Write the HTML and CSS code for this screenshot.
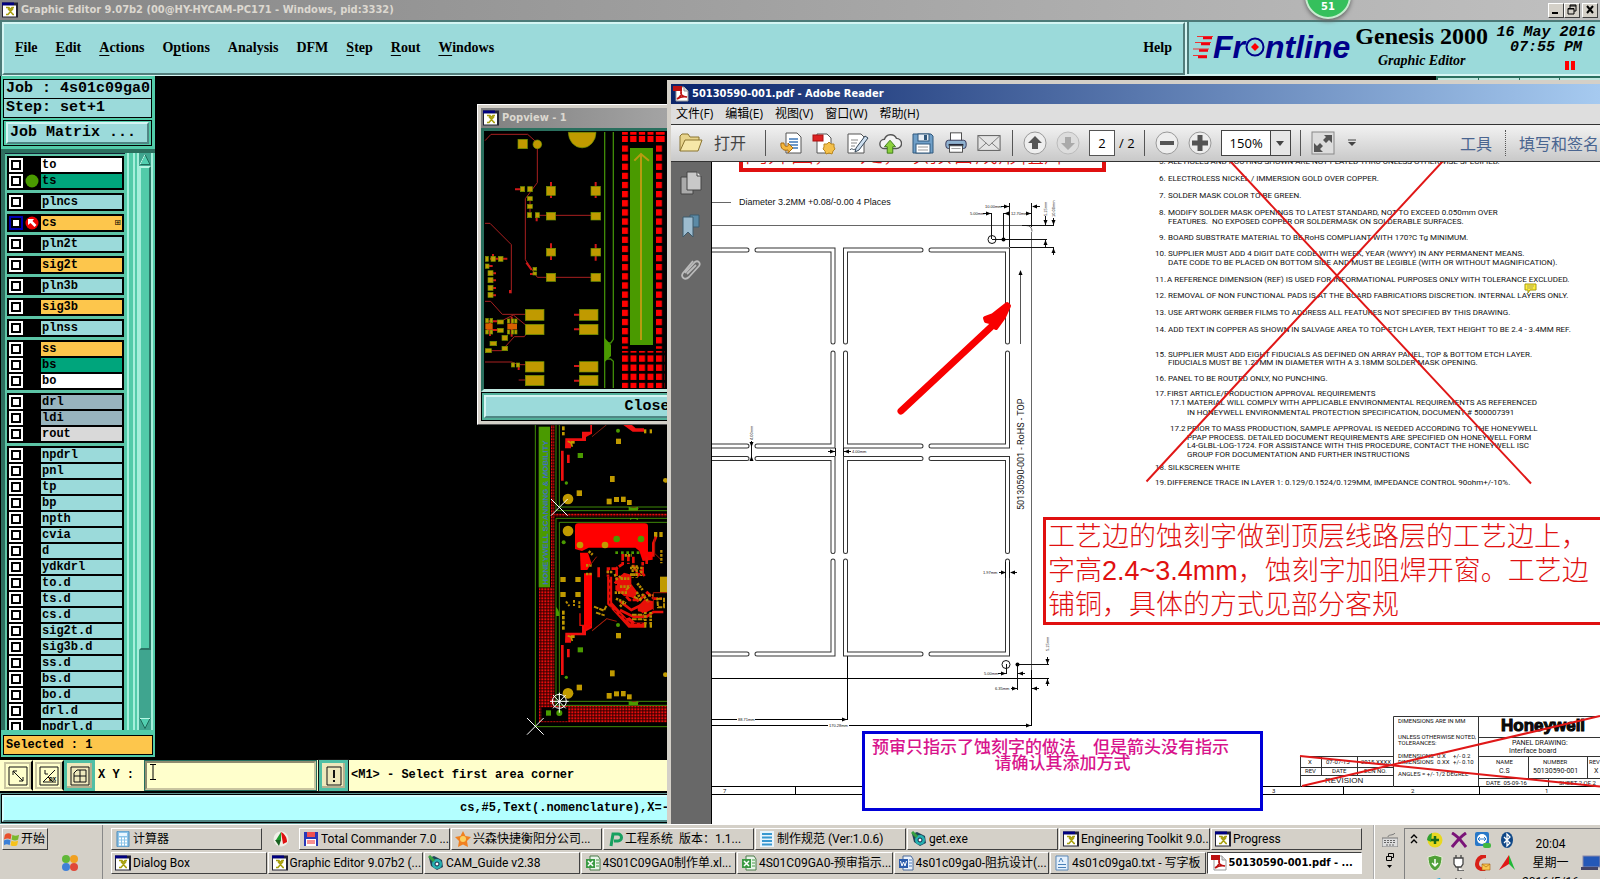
FILE: index.html
```html
<!DOCTYPE html>
<html lang="zh-CN">
<head>
<meta charset="utf-8">
<title>Graphic Editor 9.07b2</title>
<link rel="stylesheet" href="styles.css">
</head>
<body>
<svg class="defs" aria-hidden="true">
  <defs>
    <symbol id="i-x" viewBox="0 0 16 15">
      <rect x="0" y="0" width="16" height="15" fill="#223"/><rect x="0" y="0" width="12" height="3" fill="#000080"/><rect x="1" y="3" width="13" height="11" fill="#fff"/>
      <path d="M4 5h3l1 2 2-2h2M4 12h2l5-6M6 6l5 6h1" fill="none" stroke="#a8a010" stroke-width="1.6"/>
    </symbol>
    <symbol id="i-pdf" viewBox="0 0 16 16">
      <path d="M3 1h8l4 4v10H3z" fill="#fff" stroke="#999"/><path d="M11 1v4h4" fill="#ddd" stroke="#999"/>
      <rect x="0" y="0" width="9" height="5" fill="#b11"/><path d="M4 13c3-2 5-5 4-8-1 4 2 6 6 6-4-1-7 0-10 2z" fill="none" stroke="#b11" stroke-width="1.6"/>
    </symbol>
    <symbol id="i-xls" viewBox="0 0 16 16">
      <path d="M5 1h8l2 3v11H5z" fill="#e8f4e8" stroke="#4a7a4a"/><path d="M11 5h3M11 8h3M11 11h3" stroke="#4a9a4a"/>
      <rect x="1" y="4" width="9" height="9" fill="#3a9a44"/><path d="M3 6l5 5M8 6l-5 5" stroke="#fff" stroke-width="1.5"/>
    </symbol>
    <symbol id="i-doc" viewBox="0 0 16 16">
      <path d="M5 1h8l2 3v11H5z" fill="#eaf1fb" stroke="#4a6a9a"/><path d="M11 5h3M11 8h3M11 11h3" stroke="#4a7aba"/>
      <rect x="1" y="4" width="9" height="9" fill="#2c5cac"/><path d="M2.500 6l1.500 5 1.500-4 1.500 4 1.500-5" fill="none" stroke="#fff"/>
    </symbol>
    <symbol id="i-gear" viewBox="0 0 16 16">
      <path d="M1 3l5-2 8 4 1 7-6 3-6-4z" fill="#20455a"/><circle cx="9" cy="9" r="5" fill="#26b0b0"/><circle cx="9" cy="9" r="2" fill="#fff" stroke="#124"/><path d="M1 1l5 5" stroke="#38a040" stroke-width="3"/>
    </symbol>
  </defs>
</svg>

<div class="desktop">
  <main class="editor">
    <header class="titlebar">
      <svg class="ico"><use href="#i-x"/></svg>
      <h1>Graphic Editor 9.07b2 (00@HY-HYCAM-PC171 - Windows, pid:3332)</h1>
      <div class="winbtns">
        <button aria-label="Minimize"><svg viewBox="0 0 14 12"><path d="M3 9h6" stroke="#000" stroke-width="2"/></svg></button>
        <button aria-label="Restore"><svg viewBox="0 0 14 12"><path d="M5 4V1h6v6H9M5 2h6M3 4.500h6V10H3zM3 5h6" fill="none" stroke="#000"/></svg></button>
        <button class="close" aria-label="Close"><svg viewBox="0 0 14 12"><path d="M4 2l6 7M10 2L4 9" stroke="#000" stroke-width="2"/></svg></button>
      </div>
    </header>
    <div class="head">
      <nav class="menubar">
        <button><u>F</u>ile</button><button><u>E</u>dit</button><button><u>A</u>ctions</button><button>O<u>p</u>tions</button><button>Analysis</button><button>DFM</button><button><u>S</u>tep</button><button><u>R</u>out</button><button><u>W</u>indows</button>
        <button class="help">Help</button>
      </nav>
      <section class="brand">
        <div class="logo">
          <svg class="streaks" viewBox="0 0 20 24"><path d="M4 1.500h16M2 7.500h16M0 14h16M0 20.500h14" stroke="#e33" stroke-width="1"/><path d="M10 3h9M8 9h9M6 15.500h9M5 22h9" stroke="#f00010" stroke-width="2.500"/></svg>
          <span>Fr</span><svg class="target" viewBox="0 0 20 20"><circle cx="10" cy="10" r="8.500" fill="none" stroke="#00008b" stroke-width="2"/><path d="M10 6l4 4-4 4-4-4z" fill="#f00"/></svg><span>ntline</span>
        </div>
        <div class="product"><strong>Genesis 2000</strong><em>Graphic Editor</em></div>
        <div class="stamp"><span>16 May 2016</span><span>07:55 PM</span><i></i></div>
      </section>
    </div>

    <div class="work">
      <aside class="side">
        <div class="info"><div>Job : 4s01c09ga0</div><div>Step: set+1</div></div>
        <div class="matrix"><button>Job Matrix ...</button></div>
        <div class="layers">
          <div class="list">
            <div class="grp"><label class="w"><input type="checkbox"><i></i><span>to</span></label><label class="g"><input type="checkbox"><i><svg viewBox="0 0 14 14"><circle cx="7" cy="7" r="6.500" fill="#4a9a00"/></svg></i><span>ts</span></label></div>
            <div class="grp"><label><input type="checkbox"><i></i><span>plncs</span></label></div>
            <div class="grp"><label class="o cur"><input type="checkbox"><i><svg viewBox="0 0 14 14"><circle cx="7" cy="7" r="6.500" fill="#e00"/><path d="M3 3h6L7.500 5l4 4-2 2-4-4L3 9z" fill="#fff"/></svg></i><span>cs<b>⊞</b></span></label></div>
            <div class="grp"><label><input type="checkbox"><i></i><span>pln2t</span></label></div>
            <div class="grp"><label class="o"><input type="checkbox"><i></i><span>sig2t</span></label></div>
            <div class="grp"><label><input type="checkbox"><i></i><span>pln3b</span></label></div>
            <div class="grp"><label class="o"><input type="checkbox"><i></i><span>sig3b</span></label></div>
            <div class="grp"><label><input type="checkbox"><i></i><span>plnss</span></label></div>
            <div class="grp"><label class="o"><input type="checkbox"><i></i><span>ss</span></label><label class="g"><input type="checkbox"><i></i><span>bs</span></label><label class="w"><input type="checkbox"><i></i><span>bo</span></label></div>
            <div class="grp"><label class="s"><input type="checkbox"><i></i><span>drl</span></label><label class="s"><input type="checkbox"><i></i><span>ldi</span></label><label class="l"><input type="checkbox"><i></i><span>rout</span></label></div>
            <div class="grp"><label><input type="checkbox"><i></i><span>npdrl</span></label><label><input type="checkbox"><i></i><span>pnl</span></label><label><input type="checkbox"><i></i><span>tp</span></label><label><input type="checkbox"><i></i><span>bp</span></label><label><input type="checkbox"><i></i><span>npth</span></label><label><input type="checkbox"><i></i><span>cvia</span></label><label><input type="checkbox"><i></i><span>d</span></label><label><input type="checkbox"><i></i><span>ydkdrl</span></label><label><input type="checkbox"><i></i><span>to.d</span></label><label><input type="checkbox"><i></i><span>ts.d</span></label><label><input type="checkbox"><i></i><span>cs.d</span></label><label><input type="checkbox"><i></i><span>sig2t.d</span></label><label><input type="checkbox"><i></i><span>sig3b.d</span></label><label><input type="checkbox"><i></i><span>ss.d</span></label><label><input type="checkbox"><i></i><span>bs.d</span></label><label><input type="checkbox"><i></i><span>bo.d</span></label><label><input type="checkbox"><i></i><span>drl.d</span></label><label><input type="checkbox"><i></i><span>npdrl.d</span></label></div>
          </div>
          <div class="edge"></div>
          <div class="scroll">
            <svg viewBox="0 0 12 12"><path d="M6 1l5 10H1z" fill="#52cfb0" stroke="#1f6b5a"/><path d="M6 1L1 11" stroke="#b6f5e2"/></svg>
            <div class="thumb"></div>
            <svg viewBox="0 0 12 12"><path d="M1 1h10L6 11z" fill="#52cfb0" stroke="#1f6b5a"/><path d="M1 1h10" stroke="#b6f5e2"/></svg>
          </div>
        </div>
        <div class="selected">Selected : 1</div>
      </aside>
      <div class="canvas">
        <div class="ticks"><i></i><i></i><i></i><i></i></div>
        <svg class="board" viewBox="0 42 441 948">
          <defs>
            <pattern id="dots" width="9" height="9" patternUnits="userSpaceOnUse" x="1" y="4"><rect width="9" height="9" fill="#300"/><rect width="6" height="6" fill="#e80c0c"/></pattern>
            <g id="pads">
              <g fill="#c09a00"><circle cx="144" cy="267" r="16"/><rect x="170" y="241" width="16" height="17"/><rect x="270" y="198" width="14" height="18"/><rect x="260" y="266" width="15" height="17"/><rect x="282" y="261" width="15" height="15"/><rect x="303" y="260" width="14" height="16"/><rect x="321" y="270" width="14" height="15"/><rect x="288" y="86" width="15" height="16"/><rect x="126" y="49" width="8" height="12"/><rect x="126" y="66" width="8" height="10"/><rect x="138" y="92" width="26" height="9"/><rect x="372" y="58" width="7" height="12"/><rect x="389" y="58" width="7" height="12"/><circle cx="436" cy="211" r="7"/></g>
              <g fill="#4a9a00"><rect x="173" y="129" width="16" height="15"/><circle cx="139" cy="219" r="5"/><circle cx="294" cy="62" r="6"/></g>
              <g fill="#f01010"><path d="M136 85h50v-20h25v-20h5v26l-18 10v12h-45v22h-18z"/><path d="M123 122h8v90h-8zM141 134h8v25h-8zM310 45l28 20h34v-10h-25l-18-16z"/></g>
              <path d="M216 80l44-36M328 298l10-6h14l4 4M330 301h25" fill="none" stroke="#802010" stroke-width="3"/>
              <path d="M143 94l10 4 4 12" fill="none" stroke="#c09a00" stroke-width="5"/>
              <path d="M326 290q14 6 28 0v12h-28z" fill="#4a9a00"/>
            </g>
          </defs>
          <rect x="93" y="42" width="10" height="490" fill="url(#dots)"/>
          <rect x="57" y="532" width="46" height="355" fill="url(#dots)"/>
          <rect x="57" y="887" width="384" height="50" fill="url(#dots)"/>
          <rect x="103" y="311" width="338" height="8" fill="url(#dots)"/>
          <rect x="56" y="50" width="34" height="482" fill="#4a9a00"/>
          <text class="etch" transform="translate(83 524) rotate(-90)">HONEYWELL SCANNING &amp; MOBILITY</text>
          <path d="M46 42v908h395M108 42v260h333M118 42v249h323M441 325H108v561h333M441 337H118v537h323" fill="none" stroke="#3f8a08" stroke-width="3"/>
          <use href="#pads"/><use href="#pads" y="583"/>
          <path d="M330 330q10-7 24 0v-6h-24zM108 590q12 14 10 28h-10z" fill="#4a9a00"/>
          <path d="M165 350q0-10 10-10h199q10 0 10 10v75h14v24l-30 4-10-30-12-10H206l-20 10-21-6z" fill="#f00"/>
          <path d="M192 490h24v140l-6 22-18 10z" fill="#f00"/><path d="M180 428h24l10 30-12 22h-20z" fill="#f00"/>
          <path d="M292 506l20-18 22 6v28l18 24-8 18-30-6-24-16zM352 590l22-22 26 6v22l-24 12-22-4z" fill="#e81008"/>
          <g fill="#c09a00"><circle cx="144" cy="363" r="16"/><circle cx="180" cy="405" r="10"/><circle cx="255" cy="405" r="10"/><rect x="121" y="501" width="16" height="15"/><rect x="166" y="501" width="16" height="15"/><rect x="121" y="546" width="16" height="15"/><rect x="166" y="546" width="16" height="15"/><rect x="402" y="366" width="10" height="15"/><rect x="418" y="366" width="10" height="15"/><rect x="420" y="500" width="21" height="48"/><rect x="126" y="602" width="8" height="12"/><rect x="126" y="618" width="8" height="10"/></g>
          <g fill="#4a9a00"><circle cx="290" cy="387" r="10"/><circle cx="363" cy="387" r="10"/><circle cx="131" cy="397" r="6"/><rect x="286" y="424" width="8" height="8"/><rect x="303" y="424" width="8" height="8"/><rect x="319" y="424" width="8" height="8"/><rect x="334" y="424" width="8" height="8"/><rect x="350" y="424" width="8" height="8"/></g>
          <g fill="none" stroke="#e81008" stroke-width="8"><path d="M269 500v80l60 66h44" stroke-width="15"/><path d="M308 432v30l-20 14h-24v24M325 434v28M340 440v26l14 30 14-10v-30M290 478v60l20 12 18 20h30l24-22 20 18h24" stroke-dasharray="20 4"/><path d="M284 520l20-20 28 30v24l24 20M300 574l34 26 24-12 12 20M380 440v22M236 472v30M400 440v-40l8-20M360 480l14 18M300 600l40 20h40l20-14h30"/></g>
          <g fill="none" stroke="#b88a00" stroke-width="8"><path d="M206 424l12 10M198 466h18M198 492h18M260 486h20M330 474h26M330 494h22M314 436h22M350 546l14 26M300 590l14-16M376 606v40M392 606v40M284 548h40M300 530h30M352 520l16 20M366 552l20 24M288 566l30 14M302 506h26" stroke-dasharray="7 3"/><path d="M222 590l30 12 8-16M228 608l26 8M336 614h36M336 628h36M342 560l22 12M318 540l14-14M296 498l14 10M412 566h20v26h-18z" stroke-width="6" stroke-dasharray="14 3"/><path d="M338 466v38M350 466v38M364 470v28M284 492l8 20M384 556h18M424 420v40" stroke-width="7" stroke-dasharray="8 4"/></g>
          <path d="M269 500v90l64 50h34" fill="none" stroke="#500" stroke-width="3" stroke-dasharray="9 9"/>
          <path d="M400 600v-52h41M404 380v50l16 16M216 662l44-36 30 8M230 440l-20 26" fill="none" stroke="#a01808" stroke-width="3"/>
          <path d="M138 574l10 14M162 570v18M178 574v20" stroke="#b88a00" stroke-width="6" stroke-dasharray="8 4"/>
          <path d="M180 610v36h22" fill="none" stroke="#e81008" stroke-width="4"/>
          <rect x="64" y="892" width="80" height="42"/><rect x="78" y="901" width="15" height="16" fill="#4a9a00"/><circle cx="118" cy="909" r="9" fill="#4a9a00"/>
          <g fill="none" stroke="#fff" stroke-width="3"><path d="M93 267l50 50M143 267l-50 50M21 924l50 50M71 924l-50 50M99 855l38 40M137 855l-38 40M118 848v60M90 874h56"/><circle cx="118" cy="874" r="21"/></g>
        </svg>
      </div>
    </div>

    <div class="cmd">
      <button aria-label="Scale"><svg viewBox="0 0 20 20"><path d="M1 1h18v18H1zM5 5l10 10M5 5h4M5 5v4M15 15h-4M15 15v-4" fill="none" stroke="#111"/></svg></button>
      <button aria-label="Angle"><svg viewBox="0 0 20 20"><path d="M1 1h18v18H1zM4 16L16 4M4 16h13M6 4v4h3M9 11l5 5" fill="none" stroke="#111"/><text x="10" y="15" font-size="6" font-weight="bold">DX</text></svg></button>
      <button class="on" aria-label="Grid"><svg viewBox="0 0 20 20"><path d="M1 1h18v18H1zM7 4h9v12H4V7zM10 4v12M4 10h12" fill="none" stroke="#111"/></svg></button>
      <label for="xy">X Y :</label>
      <input id="xy" type="text">
      <svg class="ibeam" viewBox="0 0 6 16"><path d="M0 .500h6M3 1v14M0 15.500h6" stroke="#000"/></svg>
      <button class="on bang" aria-label="Alert"><svg viewBox="0 0 20 20"><path d="M3 1h14v18H3z" fill="none" stroke="#111"/><path d="M10 4v8M10 14v2" stroke="#111" stroke-width="2"/></svg></button>
      <output>&lt;M1&gt; - Select first area corner</output>
    </div>
    <div class="status"><div>cs,#5,Text(.nomenclature),X=-5.0</div></div>
  </main>

  <section class="popview">
    <header class="titlebar"><svg class="ico"><use href="#i-x"/></svg><h2>Popview - 1</h2></header>
    <div class="popcanvas">
      <svg viewBox="42 93 978 774">
        <defs><pattern id="sq" x="456" y="136" width="25.500" height="27.400" patternUnits="userSpaceOnUse"><rect width="18" height="19" fill="#f00"/></pattern></defs>
        <g fill="none" stroke="#a82020" stroke-width="3"><path d="M45 122l18-19h110l29 26v119l-36 48v183l36 53h180M202 346h180M45 370h15l64 64v146M45 604h17l35 39h70M100 660l30-15 37 30M45 752h50l38-42h30l10-14M45 786h80l20 8h22M166 840h-20M180 302v36"/></g>
        <g fill="none" stroke="#d01818" stroke-width="6"><path d="M243 246v48M377 246v48M243 430v50M377 432v50M135 268h18M185 510l-16-22M180 522h10M312 644h18M312 688h18M312 798h18M312 842h18M200 346v18M120 580v-10M146 798v12M60 476h52M50 498h18M60 520h18M60 541h18M60 564h18M60 586h18M69 462v12M60 668v40M125 650v60M50 664h50M50 690h48"/></g>
        <g fill="#c09a00" stroke="#6b9400" stroke-width="2"><rect x="144" y="118" width="28" height="28"/><circle cx="202" cy="133" r="13"/><rect x="229" y="259" width="27" height="27"/><rect x="363" y="259" width="28" height="27"/><rect x="229" y="337" width="28" height="23"/><rect x="363" y="337" width="29" height="23"/><rect x="229" y="445" width="28" height="23"/><rect x="363" y="445" width="29" height="23"/><rect x="229" y="520" width="28" height="24"/><rect x="363" y="520" width="29" height="24"/><path d="M295 97h83a41 46 0 0 1-83 0z"/><rect x="166" y="628" width="56" height="33"/><rect x="166" y="673" width="56" height="31"/><rect x="328" y="628" width="56" height="33"/><rect x="328" y="673" width="56" height="31"/><rect x="166" y="785" width="56" height="31"/><rect x="166" y="826" width="56" height="31"/><rect x="328" y="785" width="56" height="31"/><rect x="328" y="826" width="56" height="31"/><rect x="151" y="260" width="13" height="15"/><rect x="173" y="260" width="14" height="15"/><rect x="172" y="290" width="15" height="12"/><rect x="172" y="313" width="15" height="12"/><rect x="172" y="338" width="13" height="15"/><rect x="196" y="338" width="12" height="15"/><rect x="189" y="502" width="11" height="9"/><rect x="189" y="516" width="11" height="9"/><rect x="46" y="469" width="9" height="15"/><rect x="63" y="469" width="13" height="15"/><rect x="85" y="469" width="14" height="15"/><rect x="46" y="492" width="11" height="13"/><rect x="54" y="512" width="15" height="15"/><rect x="54" y="533" width="15" height="15"/><rect x="54" y="556" width="15" height="15"/><rect x="54" y="577" width="15" height="15"/><rect x="47" y="655" width="8" height="13"/><rect x="60" y="655" width="8" height="13"/><rect x="47" y="690" width="8" height="12"/><rect x="60" y="690" width="8" height="12"/><rect x="82" y="660" width="18" height="12"/><rect x="82" y="685" width="18" height="12"/><rect x="112" y="657" width="7" height="12"/><rect x="124" y="657" width="7" height="12"/><rect x="134" y="657" width="7" height="12"/><rect x="112" y="690" width="7" height="12"/><rect x="124" y="690" width="7" height="12"/><rect x="134" y="690" width="7" height="12"/><rect x="60" y="724" width="20" height="13"/><rect x="96" y="706" width="17" height="15"/><rect x="96" y="739" width="17" height="13"/><rect x="46" y="746" width="18" height="12"/><rect x="124" y="789" width="10" height="12"/><rect x="139" y="789" width="10" height="12"/></g>
        <rect x="46" y="670" width="22" height="18" fill="#d86000"/><rect x="112" y="671" width="29" height="17" fill="#d86000"/>
        <path d="M404 96v768M430 96v622l-8 11h-8M430 864v-80l-8-7h-12" fill="none" stroke="#3f8a08" stroke-width="4"/><path d="M404 714l19 20v34l-19 18z" fill="#4a9a00"/>
        <path d="M456 96h128v8H456zM456 108h128v18H456z" fill="#f00"/><path d="M477 96v32M503 96v32M529 96v32M554 96v32" stroke="#000" stroke-width="7"/>
        <path d="M456 136h20v610h-20zM558 136h20v610h-20z" fill="url(#sq)"/><rect x="456" y="753" width="128" height="111" fill="url(#sq)"/>
        <rect x="480" y="144" width="69" height="591" fill="#4a9a00"/><path d="M513 720V160M493 182l20-20 24 20" fill="none" stroke="#b89c10" stroke-width="6"/>
      </svg>
    </div>
    <div class="popfoot"><button>Close</button></div>
  </section>

  <section class="reader">
    <header class="rtitle"><svg class="ico"><use href="#i-pdf"/></svg><h2>50130590-001.pdf - Adobe Reader</h2></header>
    <nav class="rmenu"><button>文件(F)</button><button>编辑(E)</button><button>视图(V)</button><button>窗口(W)</button><button>帮助(H)</button></nav>
    <div class="rtools">
      <button class="open"><svg viewBox="0 0 24 20"><path d="M1 18V3l2-2h6l2 3h9v3" fill="#e8d48c" stroke="#8a7430"/><path d="M1 18L6 7h17l-4 11z" fill="#f6e7a8" stroke="#8a7430"/></svg>打开</button>
      <span class="sep"></span>
      <div class="tset">
        <button aria-label="Convert"><svg viewBox="0 0 24 24"><path d="M7 2h11l4 4v16H7z" fill="#fff" stroke="#555"/><path d="M10 8h9M10 11h9M10 14h9M12 17h7" stroke="#3f78b8" stroke-width="1.500"/><path d="M2 12c-1 6 3 8 7 7v3l5-5-5-5v3c-2 1-4 0-4-3z" fill="#f6b73c" stroke="#a86a10"/></svg></button>
        <button aria-label="Create PDF"><svg viewBox="0 0 24 24"><path d="M5 3h10l4 4v15H5z" fill="#fff" stroke="#555"/><rect x="1" y="4" width="10" height="6" fill="#d22" stroke="#a11"/><path d="M17 11l2 2 3 0 0 3 1 2-2 2-1 3-3-1-3 1-1-3-2-2 1-2 0-3 3 0z" fill="#f4c04a" stroke="#b98720"/></svg></button>
        <button aria-label="Sign"><svg viewBox="0 0 24 24"><path d="M3 3h13l3 3v16H3z" fill="#fff" stroke="#555"/><path d="M6 9h7M6 12h6M6 15h4" stroke="#888"/><path d="M20 5l3 2-9 12-4 2 1-4z" fill="#cfe0f0" stroke="#345"/><path d="M5 19c2-3 3 1 5-1" fill="none" stroke="#345"/></svg></button>
        <button aria-label="Upload"><svg viewBox="0 0 26 24"><path d="M7 18a5 5 0 0 1 0-10 7 7 0 0 1 13-1 5.500 5.500 0 0 1 0 11z" fill="#f4f4f4" stroke="#555" stroke-width="1.500"/><path d="M13 9l6 7h-3v7h-6v-7H7z" fill="#8cd03c" stroke="#3a7a18"/></svg></button>
        <button aria-label="Save"><svg viewBox="0 0 24 24"><path d="M2 3h18l2 2v17H2z" fill="#6f9fc8" stroke="#31587c"/><rect x="7" y="3" width="11" height="7" fill="#e8eef4" stroke="#31587c"/><rect x="13" y="4" width="3" height="5" fill="#31587c"/><rect x="5" y="13" width="14" height="9" fill="#fff" stroke="#31587c"/><path d="M7 16h10M7 19h10" stroke="#999"/></svg></button>
        <button aria-label="Print"><svg viewBox="0 0 26 24"><rect x="7" y="1" width="12" height="9" fill="#fff" stroke="#444"/><rect x="2" y="9" width="22" height="9" rx="3" fill="#8fb2d0" stroke="#335"/><path d="M5 14h16" stroke="#223" stroke-width="2"/><rect x="6" y="15" width="14" height="7" fill="#fff" stroke="#444"/><path d="M8 18h10" stroke="#999"/></svg></button>
        <button aria-label="Mail"><svg viewBox="0 0 26 24"><rect x="1" y="4" width="24" height="16" fill="#e4e4e4" stroke="#555"/><path d="M1 4l12 11L25 4M1 20l9-8M25 20l-9-8" fill="none" stroke="#777"/></svg></button>
      </div>
      <span class="sep"></span>
      <button aria-label="Previous page"><svg viewBox="0 0 24 24"><circle cx="12" cy="12" r="11" fill="#eee" stroke="#999"/><path d="M12 5l7 7h-4v6H9v-6H5z" fill="#555"/></svg></button>
      <button aria-label="Next page"><svg viewBox="0 0 24 24"><circle cx="12" cy="12" r="11" fill="#ddd" stroke="#bbb"/><path d="M12 19l7-7h-4V6H9v6H5z" fill="#aaa"/></svg></button>
      <div class="pager"><input class="pageno" type="text" value="2" aria-label="Page"><span>/ 2</span></div>
      <span class="sep"></span>
      <button aria-label="Zoom out"><svg viewBox="0 0 24 24"><circle cx="12" cy="12" r="11" fill="#eee" stroke="#999"/><path d="M5 12h14" stroke="#555" stroke-width="4"/></svg></button>
      <button aria-label="Zoom in"><svg viewBox="0 0 24 24"><circle cx="12" cy="12" r="11" fill="#eee" stroke="#999"/><path d="M4 12h16M12 4v16" stroke="#555" stroke-width="5"/></svg></button>
      <div class="zoombox"><select aria-label="Zoom"><option>150%</option></select><svg viewBox="0 0 8 5"><path d="M0 0h8L4 5z" fill="#444"/></svg></div>
      <span class="sep"></span>
      <button aria-label="Fit"><svg viewBox="0 0 24 24"><rect x="1" y="1" width="22" height="22" fill="#ddd" stroke="#888"/><path d="M13 4h8v8l-3-3-3 3-3-3 3-3zM3 12l3 3 3-3 3 3-3 3 3 3H3z" fill="#555"/></svg></button>
      <button class="more" aria-label="More"><svg viewBox="0 0 8 8"><path d="M0 1h8" stroke="#444"/><path d="M0 3h8L4 7z" fill="#444"/></svg></button>
      <div class="rlinks"><a href="#tools">工具</a><span class="dot"></span><a href="#sign">填写和签名</a></div>
    </div>
    <div class="rbody">
      <aside class="rside">
        <button aria-label="Pages"><svg viewBox="0 0 22 24"><path d="M1 6h12v17H1z" fill="#aaa" stroke="#444"/><path d="M7 1h10l4 4v14H7z" fill="#c8c8c8" stroke="#444"/><path d="M17 1v4h4" fill="#eee" stroke="#444"/></svg></button>
        <button aria-label="Bookmarks"><svg viewBox="0 0 22 24"><path d="M10 1h9v12h-9z" fill="#5b8aa6" stroke="#3c5a6c"/><path d="M3 3h10v20l-5-5-5 5z" fill="#9dbccf" stroke="#3c5a6c"/></svg></button>
        <button aria-label="Attachments"><svg viewBox="0 0 22 24"><path d="M5 16L15 5c3-2 6 1 4 4L9 20c-4 4-9 0-6-4L13 4M7 17L16 8" fill="none" stroke="#bbb" stroke-width="1.800"/></svg></button>
      </aside>
      <div class="page">
        <svg class="drawing" viewBox="712 162 888 662">
          <defs>
            <path id="slots" d="M712 250h35M757 250h76v92M833 353v93h-76M747 446h-35M921 250h-75.500v92M845.500 353v93h75.500M931 250h76.500v92M1007.500 353v93h-76.500M712 458.500h35M757 458.500h76v93M833 561v93h-76M747 654h-35M921 458.500h-75.500v93M845.500 561v93h75.500M931 458.500h76.500v93M1007.500 561v93h-76.500" fill="none" stroke-linecap="round"/>
            <path id="ah" d="M0 0l-5-2v4z"/>
          </defs>
          <path d="M712 225.500h310M712 202.500h19M1031.500 232v438M1026 225.500q6 0 6 6" fill="none" stroke="#666"/>
          <path d="M712 678.500h337M1031.500 670v56M712 719.500h135M847.500 652v68M712 725.500h319" fill="none" stroke="#000"/>
          <use href="#slots" stroke="#333" stroke-width="5"/><use href="#slots" stroke="#fff" stroke-width="3"/>
          <g fill="none" stroke="#111"><circle cx="992" cy="239.500" r="4"/><circle cx="1006" cy="664.500" r="4"/><path d="M991.500 213v26M1003.500 213v26M1009.500 203v44M1031.500 203v24M1001 206.500h8M1033 206.500h7M983 213.500h8M1004 213.500h6M1026 213.500h6M1022 225.500h32M992 239.500h55M1010 247.500h44M1045.500 216v9M1053.500 218v7M1045.500 240v7M1053.500 248v7M1006.500 664v10M1017.500 664v26M1017 664.500h32M1047.500 657v7M1047.500 679v7M998 673.500h8M1018 673.500h7M1011 688.500h6M1032 688.500h7M828 451.500h7M844 451.500h7M835.500 448v8M843.500 448v8M751.500 441v19M999 572.500h6M1011 572.500h6M1005.500 562v16M1009.500 562v16"/></g>
          <path d="M1020.500 344v-72" stroke="#555"/><circle cx="1003.500" cy="239.500" r="2"/><circle cx="1017.500" cy="664.500" r="2"/>
          <g><use href="#ah" x="1009" y="206.500"/><use href="#ah" x="991" y="213.500"/><use href="#ah" x="1031" y="213.500"/><use href="#ah" transform="translate(1032 206.500) rotate(180)"/><use href="#ah" transform="translate(1004 213.500) rotate(180)"/><use href="#ah" transform="translate(1045.500 225) rotate(90)"/><use href="#ah" transform="translate(1053.500 225) rotate(90)"/><use href="#ah" transform="translate(1045.500 240) rotate(-90)"/><use href="#ah" transform="translate(1053.500 248) rotate(-90)"/><use href="#ah" transform="translate(1020.500 270) rotate(-90)"/><use href="#ah" x="835" y="451.500"/><use href="#ah" transform="translate(844 451.500) rotate(180)"/><use href="#ah" transform="translate(751.500 447) rotate(90)"/><use href="#ah" transform="translate(751.500 456) rotate(-90)"/><use href="#ah" x="1006" y="572.500"/><use href="#ah" transform="translate(1010 572.500) rotate(180)"/><use href="#ah" x="1006" y="673.500"/><use href="#ah" transform="translate(1018 673.500) rotate(180)"/><use href="#ah" x="1017" y="688.500"/><use href="#ah" transform="translate(1032 688.500) rotate(180)"/><use href="#ah" transform="translate(1047.500 664) rotate(90)"/><use href="#ah" transform="translate(1047.500 679) rotate(-90)"/><use href="#ah" x="847" y="719.500"/><use href="#ah" x="1031" y="725.500"/></g>
          <path d="M737 717h18v5h-18zM828 723h21v5h-21z" fill="#fff"/>
          <g class="dim"><text x="985" y="208">10.00mm</text><text x="970" y="215">5.00mm</text><text x="1011" y="215">12.70mm</text><text x="852" y="453">4.00mm</text><text x="983" y="574">1.97mm</text><text x="984" y="675">5.00mm</text><text x="995" y="690">6.35mm</text><text x="738" y="721">88.71mm</text><text x="829" y="727">170.28mm</text><text transform="translate(1047 216) rotate(-90)">5.15mm</text><text transform="translate(1055 217) rotate(-90)">10.00mm</text><text transform="translate(1049 651) rotate(-90)">5.15mm</text><text transform="translate(753 440) rotate(-90)">4.00mm</text></g>
          <text class="t9" x="739" y="205">Diameter 3.2MM +0.08/-0.00 4 Places</text>
          <text class="t9r" transform="translate(1024 510) rotate(-90)">50130590-001 - RoHS - TOP</text>
          <g class="notes">
            <text x="1159" y="164">5.</text><text x="1168" y="164">ALL HOLES AND ROUTING SHOWN ARE NOT PLATED THRU UNLESS OTHERWISE SPECIFIED.</text>
            <text x="1159" y="181">6.</text><text x="1168" y="181">ELECTROLESS NICKEL / IMMERSION GOLD OVER COPPER.</text>
            <text x="1159" y="198">7.</text><text x="1168" y="198">SOLDER MASK COLOR TO BE GREEN.</text>
            <text x="1159" y="215">8.</text><text x="1168" y="215">MODIFY SOLDER MASK OPENINGS TO LATEST STANDARD, NOT TO EXCEED 0.050mm OVER</text><text x="1168" y="224">FEATURES.&#160; NO EXPOSED COPPER OR SOLDERMASK ON SOLDERABLE SURFACES.</text>
            <text x="1159" y="240">9.</text><text x="1168" y="240">BOARD SUBSTRATE MATERIAL TO BE RoHS COMPLIANT WITH 170?C Tg MINIMUM.</text>
            <text x="1155" y="256">10.</text><text x="1168" y="256">SUPPLIER MUST ADD 4 DIGIT DATE CODE WITH WEEK, YEAR (WWYY) IN ANY PERMANENT MEANS.</text><text x="1168" y="265">DATE CODE TO BE PLACED ON BOTTOM SIDE AND MUST BE LEGIBLE (WITH OR WITHOUT MAGNIFICATION).</text>
            <text x="1155" y="282">11.</text><text x="1167" y="282">A REFERENCE DIMENSION (REF) IS USED FOR INFORMATIONAL PURPOSES ONLY WITH TOLERANCE EXCLUDED.</text>
            <text x="1155" y="298">12.</text><text x="1168" y="298">REMOVAL OF NON FUNCTIONAL PADS IS AT THE BOARD FABRICATIORS DISCRETION. INTERNAL LAYERS ONLY.</text>
            <text x="1155" y="315">13.</text><text x="1168" y="315">USE ARTWORK GERBER FILMS TO ADDRESS ALL FEATURES NOT SPECIFIED BY THIS DRAWING.</text>
            <text x="1155" y="332">14.</text><text x="1168" y="332">ADD TEXT IN COPPER AS SHOWN IN SALVAGE AREA TO TOP ETCH LAYER, TEXT HEIGHT TO BE 2.4 - 3.4MM REF.</text>
            <text x="1155" y="357">15.</text><text x="1168" y="357">SUPPLIER MUST ADD EIGHT FIDUCIALS AS DEFINED ON ARRAY PANEL, TOP &amp; BOTTOM ETCH LAYER.</text><text x="1168" y="365">FIDUCIALS MUST BE 1.27MM IN DIAMETER WITH A 3.18MM SOLDER MASK OPENING.</text>
            <text x="1155" y="381">16.</text><text x="1168" y="381">PANEL TO BE ROUTED ONLY, NO PUNCHING.</text>
            <text x="1155" y="396">17.</text><text x="1167" y="396">FIRST ARTICLE/PRODUCTION APPROVAL REQUIREMENTS</text>
            <text x="1170" y="405">17.1</text><text x="1187" y="405">MATERIAL WILL COMPLY WITH APPLICABLE ENVIRONMENTAL REQUIREMENTS AS REFERENCED</text><text x="1187" y="415">IN HONEYWELL ENVIRONMENTAL PROTECTION SPECIFICATION, DOCUMENT # 500007391</text>
            <text x="1170" y="431">17.2</text><text x="1187" y="431">PRIOR TO MASS PRODUCTION, SAMPLE APPROVAL IS NEEDED ACCORDING TO THE HONEYWELL</text><text x="1187" y="440">PPAP PROCESS. DETAILED DOCUMENT REQUIREMENTS ARE SPECIFIED ON HONEYWELL FORM</text><text x="1187" y="448">L4-GLBL-LOG-1724. FOR ASSISTANCE WITH THIS PROCEDURE, CONTACT THE HONEYWELL ISC</text><text x="1187" y="457">GROUP FOR DOCUMENTATION AND FURTHER INSTRUCTIONS</text>
            <text x="1155" y="470">18.</text><text x="1168" y="470">SILKSCREEN WHITE</text>
            <text x="1155" y="485">19.</text><text x="1167" y="485">DIFFERENCE TRACE IN LAYER 1: 0.129/0.1524/0.129MM, IMPEDANCE CONTROL 90ohm+/-10%.</text>
          </g>
          <path d="M1525 284h11v6h-6l-2 3v-3h-3z" fill="#ffef3a" stroke="#a89a10"/><path d="M1527 286h7M1527 288h6" stroke="#777" stroke-width=".6"/>
          <path d="M1230 161l301 322.500M1443 161L1146.500 481.500" stroke="#e01818" stroke-width="2" fill="none"/>
          <path d="M712 786.500h888M712 794.500h888M795.500 787v7M1343.500 787v7M1479.500 787v7" stroke="#000" fill="none"/>
          <path d="M1393.500 787v-70.500H1600M1478.500 716v70M1479 737.500h121M1479 756.500h121M1479 778.500h121M1528.500 756v22M1587.500 756v22M1548.500 778v8M1300.500 787v-30.500h93M1300 767.500h93M1300 775.500h93M1321.500 756v19M1357.500 756v19" stroke="#333" fill="none"/>
          <g class="blk"><text x="723" y="793">7</text><text x="1272" y="793">3</text><text x="1411" y="793">2</text><text x="1545" y="793">1</text>
            <text x="1398" y="723">DIMENSIONS ARE IN MM</text><text x="1398" y="739">UNLESS OTHERWISE NOTED,</text><text x="1398" y="745">TOLERANCES:</text><text x="1398" y="758">DIMENSIONS</text><text x="1437" y="758">0.X</text><text x="1453" y="758">+/- 0.2</text><text x="1398" y="764">DIMENSIONS</text><text x="1437" y="764">0.XX</text><text x="1453" y="764">+/- 0.10</text><text x="1398" y="776">ANGLES = +/- 1/2 DEGREE</text>
            <text x="1308" y="764">X</text><text x="1326" y="764">07-07-15</text><text x="1361" y="764">2015.XXXX</text><text x="1305" y="773">REV</text><text x="1332" y="773">DATE</text><text x="1364" y="773">ECN NO.</text>
            <text x="1496" y="764">NAME</text><text x="1543" y="764">NUMBER</text><text x="1589" y="764">REV</text><text x="1486" y="785">DATE&#160; 05-09-16</text><text x="1559" y="785">SHEET 2 OF 2</text></g>
          <g class="blk7"><text x="1512" y="745">PANEL DRAWING:</text><text x="1509" y="753">Interface board</text><text x="1499" y="773">C.S</text><text x="1533" y="773">50130590-001</text><text x="1594" y="773">X</text></g>
          <text class="rev" x="1325" y="783">REVISION</text><text class="hw" x="1501" y="731">Honeywell</text>
          <path d="M1300 756l300 30.500M1302 786l298-70" stroke="#e01818" stroke-width="2" fill="none"/>
          <path d="M901 411l90-84" stroke="#f80000" stroke-width="7" stroke-linecap="round"/><path d="M985 318l8-3 14-11 2 2-5 11-8 11-4-2-2-4-4-1z" fill="#f80000" stroke="#f80000" stroke-width="4" stroke-linejoin="round"/>
        </svg>
        <p class="note cut">同外图，一处，以预留成形阻焊</p>
        <p class="note red">工艺边的蚀刻字做到顶层线路层的工艺边上，<br>字高2.4~3.4mm，蚀刻字加阻焊开窗。工艺边<br>铺铜，具体的方式见部分客规</p>
        <p class="note blue"><span>预审只指示了蚀刻字的做法　但是箭头没有指示</span><span class="mid">请确认其添加方式</span></p>
      </div>
    </div>
  </section>

  <div class="ball">51</div>

  <footer class="taskbar">
    <div class="start">
      <button><svg viewBox="0 0 18 18"><path d="M2 4q4-3 7 0l-1 5q-3-2-7 0z" fill="#e8502c"/><path d="M10 4q3 2 7 0l-1 5q-3 2-7 0z" fill="#7ab82c"/><path d="M1 10q4-2 7 0l-1 5q-3-2-6 0z" fill="#3c80d8"/><path d="M9 10q3 2 7 0l-1 5q-4 2-7 0z" fill="#f6c21c"/></svg>开始</button>
      <svg class="quick" viewBox="0 0 18 18"><circle cx="5" cy="5" r="4" fill="#60b838"/><circle cx="13" cy="5" r="4" fill="#f0a020"/><circle cx="5" cy="13" r="4" fill="#4080d8"/><circle cx="13" cy="13" r="4" fill="#e04838"/></svg>
    </div>
    <div class="tasks">
      <div class="trow">
        <button><svg viewBox="0 0 16 16"><rect x="2" y="0" width="12" height="16" rx="1" fill="#8cc4e8" stroke="#4a88b8"/><rect x="4" y="2" width="8" height="3" fill="#eaf6ff"/><path d="M4 7.500h8M4 10.500h8M4 13.500h8" stroke="#fff" stroke-width="2" stroke-dasharray="2 1"/></svg><span>计算器</span></button>
        <svg class="solo" viewBox="0 0 16 16"><circle cx="8" cy="8" r="7.500" fill="#f0f0e8"/><path d="M8 1L3 9h5z" fill="#1a9a2a"/><path d="M8 1c4 2 6 6 6 10l-4 2z" fill="#e01010"/><path d="M2 9h6l-2 6z" fill="#186020"/></svg>
        <button><svg viewBox="0 0 16 16"><path d="M1 1h14v14H1z" fill="#2838b8"/><rect x="4" y="1" width="8" height="5" fill="#f05050"/><rect x="3" y="8" width="10" height="7" fill="#fff"/><path d="M4 10h8M4 12h8" stroke="#e22"/></svg><span>Total Commander 7.0 ...</span></button>
        <button><svg viewBox="0 0 16 16"><path d="M8 0l2.500 5 5.500 1-4 4 1 6-5-2.500L3 16l1-6-4-4 5.500-1z" fill="#f08020"/><circle cx="8" cy="8" r="3" fill="#fbd060"/></svg><span>兴森快捷衡阳分公司...</span></button>
        <button><svg viewBox="0 0 16 16"><path d="M4 15L6 3h5a3 3 0 0 1 0 7H7" fill="none" stroke="#18a060" stroke-width="3"/></svg><span>工程系统&#160; 版本：1.1...</span></button>
        <button><svg viewBox="0 0 16 16"><rect x="1" y="0" width="14" height="16" fill="#e8f4fc"/><path d="M3 3h10M3 6.500h10M3 10h10M3 13.500h10" stroke="#3898d0" stroke-width="2"/></svg><span>制作规范 (Ver:1.0.6)</span></button>
        <button><svg><use href="#i-gear"/></svg><span>get.exe</span></button>
        <button><svg><use href="#i-x"/></svg><span>Engineering Toolkit 9.0...</span></button>
        <button><svg><use href="#i-x"/></svg><span>Progress</span></button>
      </div>
      <div class="trow">
        <button><svg><use href="#i-x"/></svg><span>Dialog Box</span></button>
        <button><svg><use href="#i-x"/></svg><span>Graphic Editor 9.07b2 (...</span></button>
        <button><svg><use href="#i-gear"/></svg><span>CAM_Guide v2.38</span></button>
        <button><svg><use href="#i-xls"/></svg><span>4S01C09GA0制作单.xl...</span></button>
        <button><svg><use href="#i-xls"/></svg><span>4S01C09GA0-预审指示...</span></button>
        <button><svg><use href="#i-doc"/></svg><span>4s01c09ga0-阻抗设计(...</span></button>
        <button><svg viewBox="0 0 16 16"><path d="M2 1h12v14H2z" fill="#e4f0fc" stroke="#5a88b8"/><path d="M5 7l2-4 2 4M4 9.500h8M4 12.500h8" fill="none" stroke="#4a80b8"/></svg><span>4s01c09ga0.txt - 写字板</span></button>
        <button class="active"><svg><use href="#i-pdf"/></svg><span>50130590-001.pdf - ...</span></button>
      </div>
    </div>
    <div class="lang">
      <svg viewBox="0 0 16 14"><rect x="0" y="5" width="16" height="9" fill="#ddd" stroke="#777"/><path d="M2 7.500h12M2 9.500h12M4 12h8" stroke="#666" stroke-dasharray="2 1"/><path d="M6 4c0-3 5-1 7-4" fill="none" stroke="#777"/></svg>
      <svg class="sm" viewBox="0 0 8 16"><path d="M2.500 3V.500h5v4H6M.500 3.500h5v4h-5z" fill="none" stroke="#000"/><path d="M1 12h5l-2.500 3z"/></svg>
    </div>
    <div class="tray">
      <svg class="chev" viewBox="0 0 8 10"><path d="M1 4l3-3 3 3M1 9l3-3 3 3" fill="none" stroke="#000" stroke-width="1.400"/></svg>
      <div class="icons">
        <svg viewBox="0 0 16 16"><circle cx="8" cy="8" r="7.500" fill="#e8d820"/><path d="M0 8a8 8 0 0 1 5-7l-1 9z" fill="#30a030"/><path d="M8 4v8M4 8h8" stroke="#186818" stroke-width="2.500"/></svg>
        <svg viewBox="0 0 16 16"><path d="M1 1c6 3 9 8 14 14M15 1C9 5 5 10 1 15" stroke="#7a1478" stroke-width="3" fill="none"/></svg>
        <svg viewBox="0 0 16 16"><rect x="0" y="0" width="14" height="14" rx="2" fill="#2878c8"/><circle cx="7" cy="7" r="5" fill="#fff"/><path d="M3 7h8M5 5L3 7l2 2M9 5l2 2-2 2" fill="none" stroke="#2878c8"/><rect x="8" y="11" width="8" height="5" rx="2" fill="#40b840"/></svg>
        <svg viewBox="0 0 16 16"><ellipse cx="8" cy="8" rx="6" ry="8" fill="#104888"/><path d="M5 5l6 6-3 3V2l3 3-6 6" fill="none" stroke="#fff" stroke-width="1.300"/></svg>
        <svg viewBox="0 0 16 16"><path d="M8 0l7 2c0 8-3 12-7 14C4 14 1 10 1 2z" fill="#50a038" stroke="#e8f0d8"/><path d="M8 4v7M5 8l3 3 3-3" stroke="#fff" fill="none" stroke-width="1.500"/></svg>
        <svg viewBox="0 0 16 16"><path d="M5 3V0M10 3V0M3 3h9v6l-2 3H5L3 9zM7 12v4h6" fill="#fff" stroke="#444" stroke-width="1.300"/></svg>
        <svg viewBox="0 0 16 16"><path d="M11 1C5 1 2 5 2 9s4 6 8 5" fill="none" stroke="#d82018" stroke-width="4"/><path d="M7 9h8v6H7z" fill="#f8c850" stroke="#a86010" stroke-width=".6"/><path d="M7 9l4 3 4-3" fill="none" stroke="#a86010" stroke-width=".6"/></svg>
        <svg viewBox="0 0 16 16"><path d="M10 0v9L0 15z" fill="#e01818"/><path d="M10 0l6 15-6-6z" fill="#20b838"/></svg>
        <svg viewBox="0 0 16 16"><path d="M2 3l11-3 3 6-12 6z" fill="#18a8d8"/></svg>
        <svg viewBox="0 0 16 16"><path d="M5 3V0M10 3V0M3 3h9v6l-2 3H5L3 9z" fill="#fff" stroke="#444" stroke-width="1.300"/></svg>
        <svg viewBox="0 0 16 16"><path d="M3 5h3l5-4v12L6 9H3z" fill="#ccc" stroke="#555"/></svg>
      </div>
      <time><span>20:04</span><span>星期一</span><span>2016/5/16</span></time>
      <svg class="mon" viewBox="0 0 20 16"><rect x="3" y="1" width="17" height="11" fill="#2458b8" stroke="#88a"/><path d="M1 12h17v3H1z" fill="#446"/></svg>
    </div>
  </footer>
</div>
</body>
</html>
```
FILE: styles.css
```css
* { box-sizing: border-box; }
body { margin: 0; overflow: hidden; background: #000; font-family: "Open Sans", "Noto Sans CJK SC", sans-serif; font-size: 12px; color: #000; }
button, input, select { font: inherit; color: inherit; margin: 0; padding: 0; border: 0; background: none; border-radius: 0; }
h1, h2, p { margin: 0; }
svg { display: block; flex: none; }
.defs { position: absolute; width: 0; height: 0; }
.desktop { position: relative; height: 100vh; display: flex; flex-direction: column; overflow: hidden; }
.editor { flex: 1; min-height: 0; display: flex; flex-direction: column; }

.titlebar { height: 20px; flex: none; display: flex; align-items: center; gap: 3px; padding: 0 2px; background: linear-gradient(90deg, #868686, #c0c0c0); }
.titlebar h1, .titlebar h2, .rtitle h2 { font: bold 11px/18px "DejaVu Sans Condensed", sans-serif; color: #dcd8d0; white-space: nowrap; }
.ico { width: 16px; height: 16px; }
.winbtns { margin-left: auto; display: flex; }
.winbtns button { width: 16px; height: 15px; background: #d4d0c8; border: 1px solid; border-color: #fff #404040 #404040 #fff; }
.winbtns .close { margin-left: 2px; }

.head { height: 56px; flex: none; display: flex; gap: 2px; background: #d5f5f3; border-top: 2px solid #4c7a78; border-left: 2px solid #4c7a78; }
.menubar { flex: 1; display: flex; align-items: center; gap: 18px; padding: 0 11px 2px; background: #9bdada; border: 2px solid; border-color: #d5f5f3 #527d7b #527d7b #d5f5f3; margin-bottom: 1px; }
.menubar button { font: bold 14px/18px "Liberation Serif", serif; }
.menubar u { text-underline-offset: 3px; }
.menubar .help { margin-left: auto; }
.brand { width: 413px; display: flex; align-items: center; background: #9bdada; border-left: 2px solid #4c7a78; margin-bottom: 2px; padding-bottom: 2px; }
.logo { display: flex; align-items: center; margin-left: 4px; color: #00008b; font: italic bold 32px/40px "Liberation Sans", sans-serif; }
.streaks { width: 20px; height: 24px; }
.target { width: 20px; height: 20px; }
.product { display: flex; flex-direction: column; align-items: center; margin-left: 5px; font-family: "Liberation Serif", serif; }
.product strong { font-size: 24px; line-height: 28px; }
.product em { font-size: 14px; line-height: 22px; font-weight: bold; }
.stamp { flex: 1; display: flex; flex-direction: column; align-items: center; padding-left: 4px; font: italic bold 15px/15px "Liberation Mono", monospace; white-space: nowrap; }
.stamp i { width: 10px; height: 9px; margin: 6px 0 0 48px; border: solid #f00; border-width: 0 4px; }

.work { flex: 1; min-height: 0; display: flex; background: #000; }
.side { width: 155px; flex: none; display: flex; flex-direction: column; background: #52cba9; padding: 3px 3px 0 2px; border-left: 1px solid #000; border-bottom: 2px solid #000; font-family: "Liberation Mono", monospace; font-weight: bold; }
.info { border: 1px solid #000; background: #9bdada; font-size: 15px; line-height: 18px; }
.info div { padding-left: 2px; white-space: nowrap; }
.info div + div { border-top: 1px solid #000; }
.matrix { margin-top: 2px; padding: 1px 2px; border: 1px solid #000; }
.matrix button { width: 100%; height: 22px; padding-left: 2px; text-align: left; font-size: 15px; line-height: 18px; background: #9bdada; border: 2px solid; border-color: #d5f5f3 #4f8684 #4f8684 #d5f5f3; display: block; }
.layers { flex: 1; min-height: 0; display: flex; margin: 3px -3px 0 -2px; border-top: 4px solid #2a6f5e; border-left: 4px solid #2f6f60; }
.list { width: 120px; flex: none; overflow: hidden; display: flex; flex-direction: column; gap: 3px; padding: 2px 0 0 2px; background: #5cc4a6; border-top: 1px solid #123; }
.grp { flex: none; width: 117px; background: #000; padding: 2px 2px 0; }
.grp label { display: flex; height: 16px; --c: #9bdada; }
.grp .w { --c: #fff; } .grp .g { --c: #00a57c; } .grp .o { --c: #fdc64c; } .grp .s { --c: #98b4be; } .grp .l { --c: #d9d9d9; }
.grp input { appearance: none; width: 14px; height: 14px; background: #fff; border: 2px solid #fff; box-shadow: inset 0 0 0 2px #000; }
.grp .cur input { border-color: #0000b0; }
.grp i { width: 18px; padding: 0 2px; }
.grp i svg { width: 14px; height: 14px; }
.grp span { flex: 1; height: 14px; display: flex; justify-content: space-between; background: var(--c); font-size: 12px; line-height: 14px; padding-left: 1px; }
.grp b { font: 8px/14px "DejaVu Sans", sans-serif; padding-right: 1px; }
.edge { width: 12px; background: linear-gradient(90deg, #52cba9 0 2px, #a5efdb 2px 4px, #52cba9 4px 8px, #a5efdb 8px 10px, #52cba9 10px); }
.scroll { width: 16px; display: flex; flex-direction: column; align-items: center; background: #3fa58f; border: solid; border-width: 0 2px; border-color: #256f5e #a5efdb; }
.scroll svg { width: 12px; height: 13px; }
.thumb { width: 12px; height: 484px; background: #52cba9; border: 2px solid; border-color: #b6f5e2 #2a7565 #2a7565 #a5efdb; margin-bottom: auto; }
.selected { margin: 5px -1px 2px 0; border: 1px solid #000; background: #fdc64c; font-size: 12px; line-height: 18px; padding-left: 2px; }
.canvas { flex: 1; position: relative; overflow: hidden; }
.board { position: absolute; left: 365px; top: 348px; width: 147px; height: 316px; }
.etch { font: bold 24px "Liberation Sans", sans-serif; fill: #4070a0; }
.ticks { display: flex; gap: 1px; width: 164px; height: 5px; margin-left: auto; padding: 2px 0 0 2px; background: #2a6f5e; }
.ticks i { flex: 1; background: #bfe8e0; }

.cmd { height: 34px; flex: none; display: flex; align-items: stretch; background: #ffffcc; border-top: 1px solid #000; border-bottom: 2px solid #000; padding-left: 2px; font: bold 12px/16px "Liberation Mono", monospace; position: relative; }
.cmd button { width: 31px; padding: 4px; border: 2px solid #ffffcc; border-right: 2px solid #000; background: #ffffcc; box-shadow: inset 0 0 0 2px #c9c5a0; display: flex; align-items: center; justify-content: center; }
.cmd button svg { width: 20px; height: 20px; }
.cmd .on { border: 3px solid #4fbfa5; background: #eee8bc; box-shadow: inset -2px -2px 0 #b5b190; }
.cmd label { width: 49px; padding-left: 3px; line-height: 31px; white-space: nowrap; }
.cmd input { width: 171px; margin: 1px; border: 2px solid; border-color: #8f8c70 #c9c5a0 #c9c5a0 #8f8c70; outline: 1px solid #256f5e; padding-left: 6px; }
.ibeam { position: absolute; left: 150px; top: 4px; width: 6px; height: 16px; }
.cmd .bang { width: 29px; margin-left: 2px; outline: 1px solid #111; }
.cmd output { line-height: 31px; padding-left: 3px; }
.status { height: 31px; flex: none; padding: 2px; background: #5f9490; }
.status div { height: 27px; border: 2px solid; border-color: #d5ffff #4f8684 #4f8684 #d5ffff; outline: 1px solid #000; background: #b3ffff; padding-left: 456px; font: bold 12px/22px "Liberation Mono", monospace; }

.popview { position: absolute; left: 477px; top: 104px; width: 340px; background: #d4d0c8; padding: 3px; border: 1px solid; border-color: #fff #555 #555 #fff; }
.popview .titlebar { background: linear-gradient(90deg, #808080, #c0c0c0); }
.popcanvas { background: #000; border: solid #2a6f5e; border-width: 3px 3px 0; border-bottom: 3px solid #bfe8e0; }
.popcanvas svg { width: 100%; height: 258px; }
.popfoot { padding: 2px; background: #52b09a; border: 1px solid #000; }
.popfoot button { display: block; width: 100%; height: 23px; background: #9bdada; border: 2px solid; border-color: #d5f5f3 #4f8684 #4f8684 #d5f5f3; font: bold 15px/18px "Liberation Mono", monospace; }

.reader { position: absolute; left: 667px; top: 80px; right: 0; bottom: 55px; display: flex; flex-direction: column; background: #ddd; border-top: 4px solid #d4d0c8; border-left: 4px solid #d4d0c8; }
.rtitle { height: 20px; flex: none; display: flex; align-items: center; gap: 3px; padding-left: 2px; background: linear-gradient(90deg, #0a246a, #a6caf0); }
.rtitle h2 { color: #fff; }
.rmenu { height: 20px; flex: none; display: flex; align-items: center; gap: 12px; padding-left: 5px; background: #dedede; }
.rmenu button { line-height: 18px; white-space: nowrap; }
.rtools { height: 38px; flex: none; display: flex; align-items: center; gap: 9px; padding-left: 8px; background: linear-gradient(#f2f2f2, #c9c9c9); border: solid #333; border-width: 1px 0; font-size: 16px; white-space: nowrap; }
.rtools button svg { width: 24px; height: 24px; }
.rtools .open { display: flex; align-items: center; gap: 11px; color: #444; margin-right: 10px; line-height: 22px; }
.sep { width: 1px; height: 26px; background: #555; }
.tset { display: flex; gap: 9px; margin: 0 2px 0 4px; }
.sep + button { margin-left: 1px; }
.pager { display: flex; align-items: center; gap: 4px; font-size: 13px; }
.pageno { width: 26px; height: 26px; border: 1px solid #555; background: #fff; text-align: center; }
.zoombox { position: relative; }
.zoombox select { display: block; appearance: none; width: 70px; height: 26px; padding-left: 8px; border: 1px solid #444; font-size: 13px; background: linear-gradient(90deg, #fff 48px, #444 48px 49px, #e6e6e6 49px); }
.zoombox svg { position: absolute; right: 7px; top: 11px; width: 8px; height: 5px; pointer-events: none; }
.rtools .more svg { width: 8px; height: 8px; margin-left: 4px; }
.rlinks { display: flex; align-items: center; gap: 13px; margin-left: auto; padding-right: 1px; }
.rlinks a { color: #4a6590; text-decoration: none; }
.rlinks .dot { height: 26px; border-left: 1px dotted #555; }
.rbody { flex: 1; min-height: 0; display: flex; }
.rside { width: 41px; flex: none; background: #686868; border-right: 1px solid #000; display: flex; flex-direction: column; align-items: center; gap: 19px; padding-top: 9px; }
.rside svg { width: 22px; height: 24px; }
.page { flex: 1; position: relative; overflow: hidden; background: #fff; }
.drawing { width: 888px; height: 662px; }
.drawing text { fill: #111; }
.board .etch { fill: #4070c0; }
.notes { font: 8px Roboto, sans-serif; }
.dim { font: 4px "Liberation Sans", sans-serif; }
.blk { font: 6px Roboto, sans-serif; }
.blk7 { font: 7px Roboto, sans-serif; }
.rev { font: 8px "Liberation Sans", sans-serif; }
.t9 { font: 9px "Liberation Sans", sans-serif; }
.t9r { font: 9px Roboto, sans-serif; }
.hw { font: bold 17px "Liberation Sans", sans-serif; stroke: #000; }
.note { position: absolute; white-space: nowrap; background: #fff; }
.red, .cut { border: 3px solid #e01010; color: #e01010; font: 300 27px/34px "Liberation Sans", "Noto Sans CJK SC", sans-serif; }
.red { left: 331px; top: 355px; right: -10px; padding: 0 2px; }
.cut { left: 27px; top: -26px; width: 367px; height: 36px; border-width: 4px; padding-left: 2px; line-height: 28px; font-size: 23px; overflow: hidden; }
.blue { left: 150px; top: 569px; width: 401px; height: 80px; border: 3px solid #0000d8; padding: 4px 7px; color: #d8148c; font: 500 17px/16px "Noto Sans CJK SC", sans-serif; display: flex; flex-direction: column; }
.blue .mid { align-self: center; }

.ball { position: absolute; left: 1305px; top: -27px; width: 46px; height: 46px; border-radius: 50%; background: #35c05c; border: 2px solid #c8ecd0; box-shadow: 0 2px 4px #666; color: #fff; font: bold 11px/64px "DejaVu Sans Condensed", sans-serif; text-align: center; }

.taskbar { height: 55px; flex: none; display: flex; overflow: hidden; background: #d4d0c8; border-top: 1px solid #fff; font-family: Roboto, "Noto Sans CJK SC", sans-serif; }
.start { width: 103px; border-right: 1px solid #888; padding: 3px 2px; }
.start button { display: flex; align-items: center; gap: 1px; width: 46px; height: 22px; line-height: 16px; border: 1px solid; border-color: #fff #404040 #404040 #fff; }
.start button svg { width: 17px; height: 17px; }
.quick { width: 18px; height: 18px; margin: 4px 0 0 59px; }
.tasks { flex: 1; min-width: 0; display: flex; flex-direction: column; gap: 2px; padding: 3px 11px 0 8px; }
.trow { display: flex; gap: 1px; }
.trow button { flex: 1 1 0; min-width: 0; height: 22px; display: flex; align-items: center; gap: 2px; padding-left: 3px; text-align: left; border: 1px solid; border-color: #fff #404040 #404040 #fff; }
.trow button svg, .solo { width: 16px; height: 16px; }
.solo { margin: 3px 9px 0 10px; }
.trow span { white-space: nowrap; overflow: hidden; line-height: 18px; }
.trow .active { font: bold 11px/18px "DejaVu Sans Condensed", sans-serif; background: #fff; border-color: #404040 #fff #fff #404040; }
.lang { width: 31px; border-left: 2px groove #fff; display: flex; flex-direction: column; align-items: center; gap: 6px; padding-top: 8px; }
.lang svg { width: 16px; height: 14px; }
.lang .sm { width: 8px; height: 16px; }
.tray { width: 196px; margin-top: 3px; border: solid #808080; border-width: 1px 0 0 1px; display: flex; }
.chev { width: 8px; height: 10px; margin: 5px 5px 0; }
.icons { display: grid; grid-template-columns: repeat(4, 16px); gap: 7px 8px; align-content: start; padding: 3px 0 0 4px; }
.icons svg { width: 16px; height: 16px; }
.tray time { flex: 1; display: flex; flex-direction: column; align-items: center; padding: 6px 0 0 6px; line-height: 19px; white-space: nowrap; }
.mon { width: 20px; height: 16px; align-self: center; margin-top: 18px; }
```
